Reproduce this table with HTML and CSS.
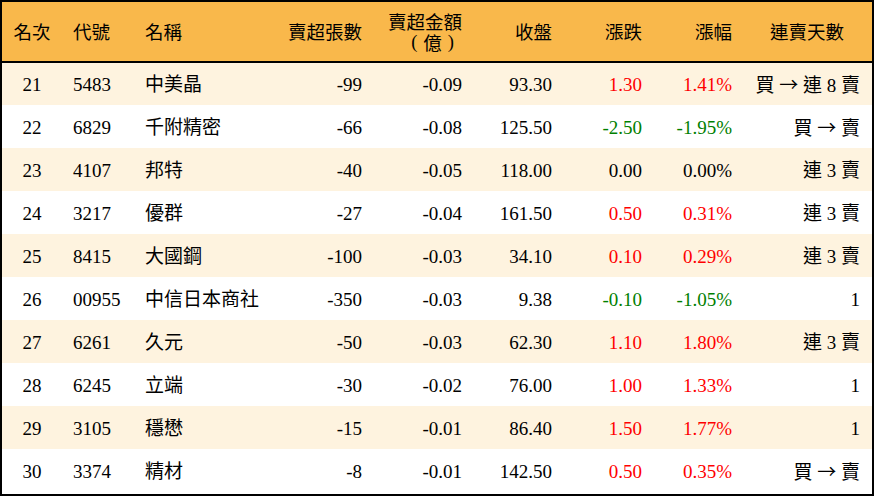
FILE: index.html
```html
<!DOCTYPE html>
<html lang="zh-Hant">
<head>
<meta charset="utf-8">
<link rel="stylesheet" href="styles.css">
</head>
<body>
<div class="frame">
<table class="rank">
<colgroup>
<col class="c-rank"><col class="c-code"><col class="c-name"><col class="c-vol"><col class="c-amt"><col class="c-close"><col class="c-chg"><col class="c-pct"><col class="c-days">
</colgroup>
<thead>
<tr>
<th class="ctr">名次</th>
<th class="lft">代號</th>
<th class="lft">名稱</th>
<th class="rgt">賣超張數</th>
<th class="rgt"><span class="hl">賣超金額</span><span class="hl"><span class="pl">(</span>億<span class="pr">)</span></span></th>
<th class="rgt">收盤</th>
<th class="rgt">漲跌</th>
<th class="rgt">漲幅</th>
<th class="ctr">連賣天數</th>
</tr>
</thead>
<tbody>
<tr><td class="ctr">21</td><td class="lft">5483</td><td class="lft">中美晶</td><td class="rgt">-99</td><td class="rgt">-0.09</td><td class="rgt">93.30</td><td class="rgt up">1.30</td><td class="rgt up">1.41%</td><td class="rgt">買 <span class="arrow">→</span> 連 8 賣</td></tr>
<tr><td class="ctr">22</td><td class="lft">6829</td><td class="lft">千附精密</td><td class="rgt">-66</td><td class="rgt">-0.08</td><td class="rgt">125.50</td><td class="rgt down">-2.50</td><td class="rgt down">-1.95%</td><td class="rgt">買 <span class="arrow">→</span> 賣</td></tr>
<tr><td class="ctr">23</td><td class="lft">4107</td><td class="lft">邦特</td><td class="rgt">-40</td><td class="rgt">-0.05</td><td class="rgt">118.00</td><td class="rgt">0.00</td><td class="rgt">0.00%</td><td class="rgt">連 3 賣</td></tr>
<tr><td class="ctr">24</td><td class="lft">3217</td><td class="lft">優群</td><td class="rgt">-27</td><td class="rgt">-0.04</td><td class="rgt">161.50</td><td class="rgt up">0.50</td><td class="rgt up">0.31%</td><td class="rgt">連 3 賣</td></tr>
<tr><td class="ctr">25</td><td class="lft">8415</td><td class="lft">大國鋼</td><td class="rgt">-100</td><td class="rgt">-0.03</td><td class="rgt">34.10</td><td class="rgt up">0.10</td><td class="rgt up">0.29%</td><td class="rgt">連 3 賣</td></tr>
<tr><td class="ctr">26</td><td class="lft">00955</td><td class="lft">中信日本商社</td><td class="rgt">-350</td><td class="rgt">-0.03</td><td class="rgt">9.38</td><td class="rgt down">-0.10</td><td class="rgt down">-1.05%</td><td class="rgt">1</td></tr>
<tr><td class="ctr">27</td><td class="lft">6261</td><td class="lft">久元</td><td class="rgt">-50</td><td class="rgt">-0.03</td><td class="rgt">62.30</td><td class="rgt up">1.10</td><td class="rgt up">1.80%</td><td class="rgt">連 3 賣</td></tr>
<tr><td class="ctr">28</td><td class="lft">6245</td><td class="lft">立端</td><td class="rgt">-30</td><td class="rgt">-0.02</td><td class="rgt">76.00</td><td class="rgt up">1.00</td><td class="rgt up">1.33%</td><td class="rgt">1</td></tr>
<tr><td class="ctr">29</td><td class="lft">3105</td><td class="lft">穩懋</td><td class="rgt">-15</td><td class="rgt">-0.01</td><td class="rgt">86.40</td><td class="rgt up">1.50</td><td class="rgt up">1.77%</td><td class="rgt">1</td></tr>
<tr><td class="ctr">30</td><td class="lft">3374</td><td class="lft">精材</td><td class="rgt">-8</td><td class="rgt">-0.01</td><td class="rgt">142.50</td><td class="rgt up">0.50</td><td class="rgt up">0.35%</td><td class="rgt">買 <span class="arrow">→</span> 賣</td></tr>
</tbody>
</table>
</div>
</body>
</html>
```

FILE: styles.css
```css
html, body {
  margin: 0;
  padding: 0;
  background: #ffffff;
}

.frame {
  width: 874px;
  height: 496px;
  box-sizing: border-box;
  border: 2px solid #000;
  overflow: hidden;
}

.rank {
  width: 870px;
  border-collapse: collapse;
  table-layout: fixed;
  font-family: "Liberation Serif", "Noto Sans CJK TC", serif;
  font-size: 19px;
  color: #000;
}

.c-rank { width: 60px; }
.c-code { width: 73px; }
.c-name { width: 145px; }
.c-vol { width: 92px; }
.c-amt { width: 100px; }
.c-close { width: 90px; }
.c-chg { width: 90px; }
.c-pct { width: 90px; }
.c-days { width: 130px; }

.rank thead tr {
  height: 60px;
  background: #f9b84b;
  border-bottom: 2px solid #000;
}

.rank th {
  font-family: "Noto Sans CJK TC", sans-serif;
  font-weight: normal;
  font-size: 18.5px;
  padding: 0 10px;
  line-height: 21px;
  white-space: nowrap;
}

.rank th.rgt {
  padding-left: 2px;
}

.hl {
  display: flex;
  justify-content: flex-end;
  align-items: center;
  height: 21px;
  line-height: 21px;
}

.pl, .pr {
  font-family: "Liberation Serif", serif;
  line-height: 1;
}

.pl {
  margin-right: 6px;
}

.pr {
  margin-left: 6px;
  margin-right: 8px;
}

.rank td {
  padding: 2px 10px 0;
  line-height: 22px;
  white-space: nowrap;
}

.rank tbody tr {
  height: 43px;
}

.rank tbody tr:nth-child(odd) {
  background: #fef3df;
}

.ctr { text-align: center; }
.lft { text-align: left; }
.rgt { text-align: right; }

.rank td.lft:nth-child(2), .rank th.lft:nth-child(2) { padding-left: 11px; }
.rank td:last-child { padding-right: 12px; }

.arrow {
  font-family: "Noto Sans CJK TC", sans-serif;
}

.up { color: #ff0000; }
.down { color: #008000; }
```
